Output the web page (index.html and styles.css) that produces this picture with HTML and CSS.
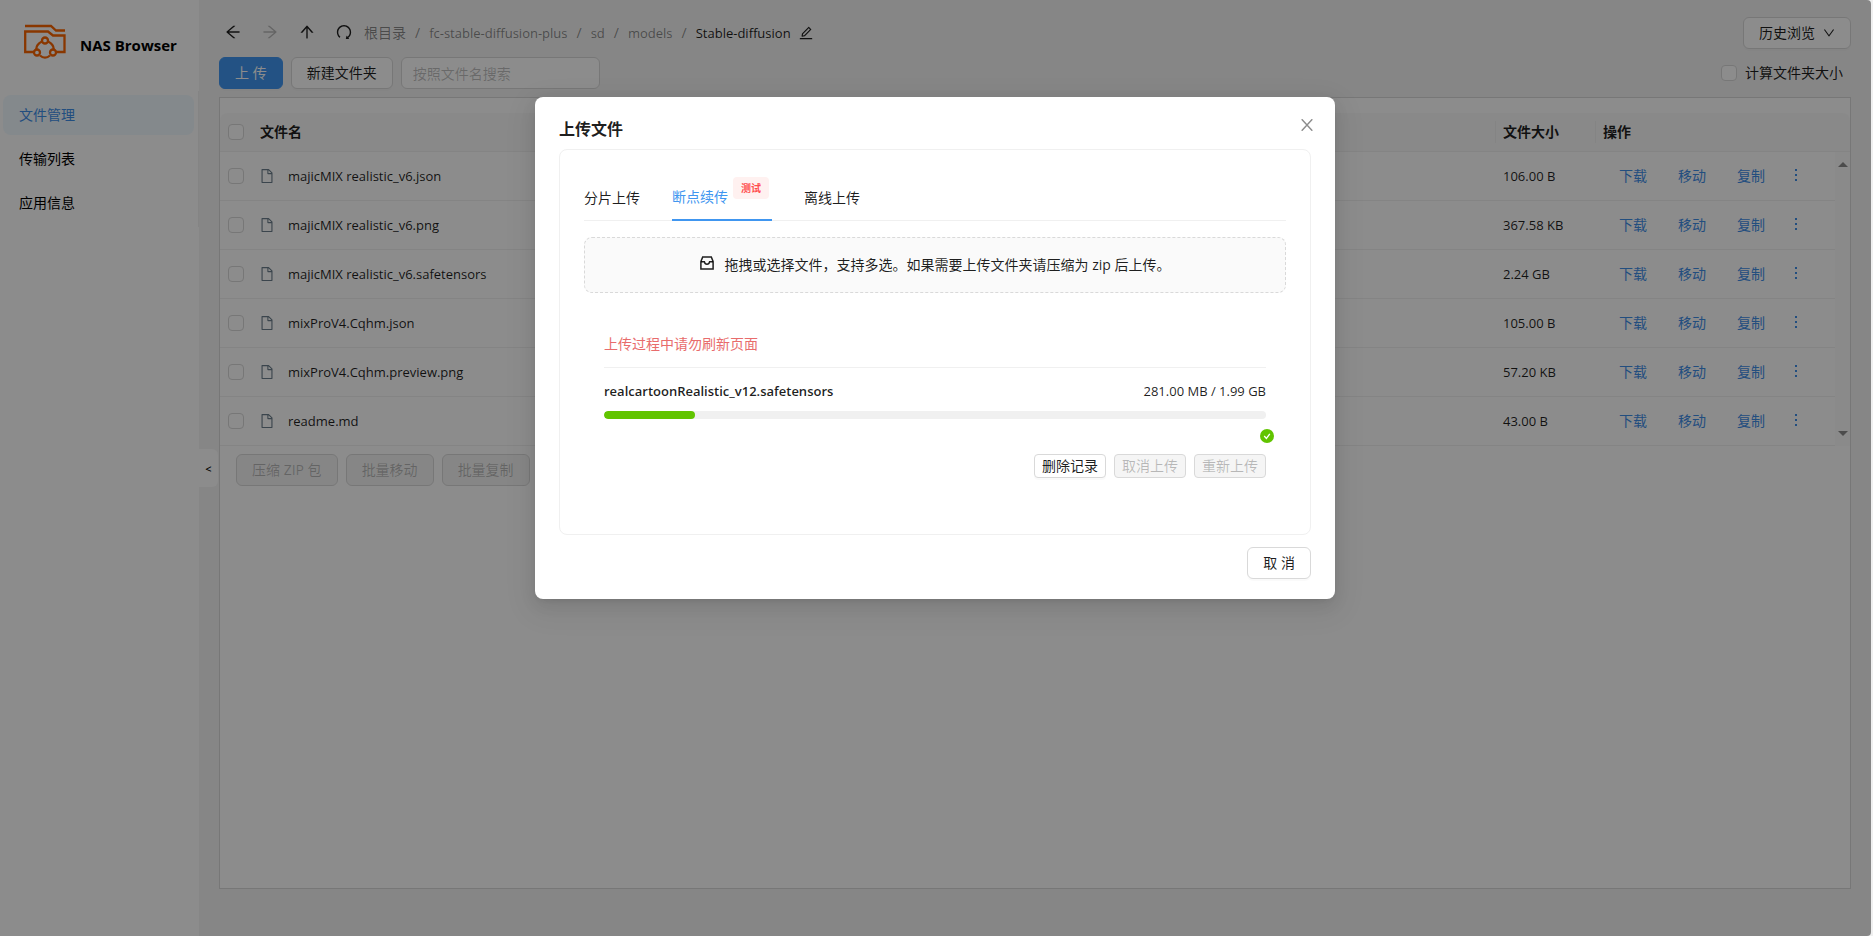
FILE: index.html
```html
<!DOCTYPE html>
<html lang="zh-CN">
<head>
<meta charset="utf-8">
<title>NAS Browser</title>
<link rel="stylesheet" href="styles.css">
</head>
<body>
<svg class="defs" aria-hidden="true">
  <symbol id="file" viewBox="64 64 896 896"><path d="M854.6 288.6L639.4 73.4c-6-6-14.1-9.4-22.6-9.4H192c-17.7 0-32 14.3-32 32v832c0 17.7 14.3 32 32 32h640c17.7 0 32-14.3 32-32V311.3c0-8.5-3.4-16.7-9.4-22.7zM790.2 326H602V137.8L790.2 326zm1.8 562H232V136h302v216a42 42 0 0042 42h216v494z"/></symbol>
  <symbol id="more" viewBox="0 0 14 14"><path d="M6 0h2v2H6zM6 5h2v2H6zM6 10h2v2H6z"/></symbol>
</svg>
<div class="app">
  <aside class="sidebar">
    <div class="brand">
      <svg class="logo" viewBox="0 0 42 36" fill="none" stroke="#fa6400" stroke-width="2.300">
        <path d="M1 2h26l5 4.500h9"/>
        <path d="M10 28H1.200V7.500H24l5 4h11.500V28H32"/>
        <path d="M18 17.500C14 19.500 12.300 22 12.300 25M24 17.500c4 2 5.700 4.500 5.700 7.500M16 31.500c3 2.700 7 2.700 10 0"/>
        <circle cx="21" cy="16.500" r="3"/><circle cx="13" cy="28.500" r="3"/><circle cx="29" cy="28.500" r="3"/>
      </svg>
      <strong class="brand-name">NAS Browser</strong>
    </div>
    <nav class="menu">
      <a class="menu-item active" href="#">文件管理</a>
      <a class="menu-item" href="#">传输列表</a>
      <a class="menu-item" href="#">应用信息</a>
    </nav>
    <button class="collapse" type="button">&lt;</button>
  </aside>

  <main class="main">
    <div class="bar path-bar">
      <div class="nav-icons">
        <button class="icon-btn" type="button" aria-label="后退"><svg viewBox="64 64 896 896"><path d="M872 474H286.900l350.200-304c5.600-4.900 2.200-14-5.200-14h-88.500c-3.900 0-7.600 1.400-10.500 3.900L155 487.800a31.960 31.960 0 000 48.300L535.100 866c1.500 1.300 3.300 2 5.200 2h91.500c7.400 0 10.800-9.200 5.200-14L286.900 550H872c4.400 0 8-3.600 8-8v-60c0-4.400-3.600-8-8-8z"/></svg></button>
        <button class="icon-btn" type="button" aria-label="前进" disabled><svg viewBox="64 64 896 896"><path d="M869 487.800L491.200 159.900c-2.900-2.500-6.600-3.900-10.500-3.900h-88.500c-7.400 0-10.800 9.200-5.200 14l350.200 304H152c-4.400 0-8 3.600-8 8v60c0 4.400 3.600 8 8 8h585.100L386.900 854c-5.600 4.900-2.200 14 5.200 14h91.500c1.900 0 3.800-.7 5.200-2L869 536.200a32.070 32.070 0 000-48.400z"/></svg></button>
        <button class="icon-btn" type="button" aria-label="上级"><svg viewBox="64 64 896 896"><path d="M868 545.500L536.100 163a31.960 31.960 0 00-48.300 0L156 545.500a7.970 7.970 0 006 13.200h81c4.600 0 9-2 12.100-5.500L474 300.900V864c0 4.400 3.600 8 8 8h60c4.400 0 8-3.600 8-8V300.900l218.900 252.300c3 3.500 7.400 5.500 12.100 5.500h81c6.800 0 10.500-8 6-13.200z"/></svg></button>
        <button class="icon-btn" type="button" aria-label="刷新"><svg viewBox="64 64 896 896"><path d="M758.200 839.100C851.800 765.900 912 651.900 912 523.900 912 303 733.500 124.300 512.600 124 291.400 123.700 112 302.800 112 523.900c0 125.200 57.500 236.900 147.600 310.200 3.500 2.800 8.600 2.200 11.400-1.300l39.400-50.500c2.700-3.400 2.100-8.300-1.200-11.100-8.100-6.600-15.900-13.700-23.400-21.200a318.640 318.640 0 01-68.600-101.700C200.400 609 192 567.100 192 523.900s8.400-85.100 25.100-124.500c16.100-38.100 39.200-72.300 68.600-101.700 29.400-29.400 63.600-52.500 101.700-68.600C426.900 212.400 468.800 204 512 204s85.100 8.400 124.500 25.100c38.100 16.100 72.300 39.200 101.700 68.600 29.400 29.400 52.500 63.600 68.600 101.700 16.700 39.400 25.100 81.300 25.100 124.500s-8.400 85.100-25.100 124.500a318.640 318.640 0 01-68.600 101.700c-9.300 9.300-19.100 18-29.300 26L668.200 724a8 8 0 00-14.100 3l-39.600 162.200c-1.200 5 2.600 9.900 7.700 9.900l167 .8c6.700 0 10.500-7.700 6.300-12.900l-37.300-47.900z"/></svg></button>
      </div>
      <nav class="crumbs">
        <a href="#">根目录</a><span>/</span><a class="lat" href="#">fc-stable-diffusion-plus</a><span>/</span><a class="lat" href="#">sd</a><span>/</span><a class="lat" href="#">models</a><span>/</span><span class="lat current">Stable-diffusion</span>
      </nav>
      <button class="icon-btn edit" type="button" aria-label="编辑"><svg viewBox="64 64 896 896"><path d="M257.700 752c2 0 4-.2 6-.5L431.900 722c2-.4 3.900-1.300 5.300-2.800l423.900-423.900a9.960 9.960 0 000-14.100L694.900 114.900c-1.900-1.900-4.400-2.900-7.100-2.900s-5.200 1-7.100 2.900L256.800 538.800c-1.500 1.500-2.400 3.300-2.800 5.300l-29.500 168.200a33.500 33.500 0 009.400 29.800c6.600 6.400 14.900 9.900 23.800 9.900zm67.400-174.400L687.800 215l73.300 73.300-362.700 362.600-88.900 15.700 15.600-89zM880 836H144c-17.700 0-32 14.300-32 32v36c0 4.400 3.600 8 8 8h784c4.400 0 8-3.600 8-8v-36c0-17.700-14.300-32-32-32z"/></svg></button>
      <button class="btn push" type="button">历史浏览<svg class="caret" viewBox="64 64 896 896"><path d="M884 256h-75c-5.100 0-9.900 2.500-12.900 6.600L512 654.200 227.900 262.600c-3-4.100-7.800-6.600-12.900-6.600h-75c-6.500 0-10.300 7.400-6.500 12.700l352.600 486.100c12.800 17.600 39 17.600 51.700 0l352.600-486.100c3.900-5.300.1-12.700-6.400-12.700z"/></svg></button>
    </div>
    <div class="bar">
      <button class="btn primary" type="button">上 传</button>
      <button class="btn" type="button">新建文件夹</button>
      <input class="search" type="text" placeholder="按照文件名搜索" aria-label="按照文件名搜索">
      <label class="calc push"><input class="check" type="checkbox">计算文件夹大小</label>
    </div>

    <section class="panel">
      <table class="files head">
        <colgroup><col class="c-check"><col><col class="c-size"><col class="c-ops"><col class="c-scroll"></colgroup>
        <thead><tr>
          <th><input class="check" type="checkbox" aria-label="全选"></th>
          <th>文件名</th><th class="split">文件大小</th><th class="split">操作</th><th></th>
        </tr></thead>
      </table>
      <div class="rows">
        <table class="files">
          <colgroup><col class="c-check"><col><col class="c-size"><col class="c-ops"></colgroup>
          <tbody>
            <tr><td><input class="check" type="checkbox" aria-label="majicMIX realistic_v6.json"></td><td><div class="name lat"><svg><use href="#file"/></svg>majicMIX realistic_v6.json</div></td><td class="lat">106.00 B</td><td><div class="ops"><a href="#">下载</a><a href="#">移动</a><a href="#">复制</a><a href="#" aria-label="更多"><svg><use href="#more"/></svg></a></div></td></tr>
            <tr><td><input class="check" type="checkbox" aria-label="majicMIX realistic_v6.png"></td><td><div class="name lat"><svg><use href="#file"/></svg>majicMIX realistic_v6.png</div></td><td class="lat">367.58 KB</td><td><div class="ops"><a href="#">下载</a><a href="#">移动</a><a href="#">复制</a><a href="#" aria-label="更多"><svg><use href="#more"/></svg></a></div></td></tr>
            <tr><td><input class="check" type="checkbox" aria-label="majicMIX realistic_v6.safetensors"></td><td><div class="name lat"><svg><use href="#file"/></svg>majicMIX realistic_v6.safetensors</div></td><td class="lat">2.24 GB</td><td><div class="ops"><a href="#">下载</a><a href="#">移动</a><a href="#">复制</a><a href="#" aria-label="更多"><svg><use href="#more"/></svg></a></div></td></tr>
            <tr><td><input class="check" type="checkbox" aria-label="mixProV4.Cqhm.json"></td><td><div class="name lat"><svg><use href="#file"/></svg>mixProV4.Cqhm.json</div></td><td class="lat">105.00 B</td><td><div class="ops"><a href="#">下载</a><a href="#">移动</a><a href="#">复制</a><a href="#" aria-label="更多"><svg><use href="#more"/></svg></a></div></td></tr>
            <tr><td><input class="check" type="checkbox" aria-label="mixProV4.Cqhm.preview.png"></td><td><div class="name lat"><svg><use href="#file"/></svg>mixProV4.Cqhm.preview.png</div></td><td class="lat">57.20 KB</td><td><div class="ops"><a href="#">下载</a><a href="#">移动</a><a href="#">复制</a><a href="#" aria-label="更多"><svg><use href="#more"/></svg></a></div></td></tr>
            <tr><td><input class="check" type="checkbox" aria-label="readme.md"></td><td><div class="name lat"><svg><use href="#file"/></svg>readme.md</div></td><td class="lat">43.00 B</td><td><div class="ops"><a href="#">下载</a><a href="#">移动</a><a href="#">复制</a><a href="#" aria-label="更多"><svg><use href="#more"/></svg></a></div></td></tr>
          </tbody>
        </table>
        <div class="scrollbar">
          <svg viewBox="0 0 10 5"><path d="M5 0l5 5H0z"/></svg>
          <svg viewBox="0 0 10 5"><path d="M0 0h10L5 5z"/></svg>
        </div>
      </div>
      <div class="batch">
        <button class="btn" type="button" disabled>压缩 ZIP 包</button>
        <button class="btn" type="button" disabled>批量移动</button>
        <button class="btn" type="button" disabled>批量复制</button>
      </div>
    </section>
  </main>

  <div class="mask">
    <div class="modal" role="dialog" aria-labelledby="dlg-title">
      <header class="modal-head">
        <h2 id="dlg-title">上传文件</h2>
        <button class="close" type="button" aria-label="关闭"><svg viewBox="0 0 12 12" fill="none" stroke="currentColor" stroke-width="1.400"><path d="M.7.200l10.600 11.600M11.300.200L.7 11.800"/></svg></button>
      </header>
      <div class="card">
        <div class="tabs" role="tablist">
          <button class="tab" role="tab" type="button">分片上传</button>
          <button class="tab active" role="tab" type="button">断点续传<span class="tag">测试</span></button>
          <button class="tab" role="tab" type="button">离线上传</button>
        </div>
        <div class="drop">
          <svg viewBox="0 0 14 14" fill="none" stroke="currentColor" stroke-width="1.500"><path d="M.9 5.500L2.700.9h8.600l1.800 4.600v7.600H.9z"/><path d="M1 5.800h3.400c.3 1.600 1.300 2.400 2.600 2.400s2.300-.8 2.600-2.400H13"/></svg>
          <span>拖拽或选择文件，支持多选。如果需要上传文件夹请压缩为 zip 后上传。</span>
        </div>
        <div class="tasks">
          <p class="warn">上传过程中请勿刷新页面</p>
          <div class="task-info lat"><b>realcartoonRealistic_v12.safetensors</b><span>281.00 MB / 1.99 GB</span></div>
          <div class="progress"><div class="progress-fill" style="width:13.8%"></div></div>
          <div class="status"><svg viewBox="0 0 14 14"><circle cx="7" cy="7" r="7" fill="#61c400"/><path d="M4.200 7l2.200 2.500 3.400-4.700" fill="none" stroke="#fff" stroke-width="1.300"/></svg></div>
          <div class="task-actions">
            <button class="btn small" type="button">删除记录</button>
            <button class="btn small" type="button" disabled>取消上传</button>
            <button class="btn small" type="button" disabled>重新上传</button>
          </div>
        </div>
      </div>
      <footer class="modal-foot"><button class="btn" type="button">取 消</button></footer>
    </div>
  </div>
</div>
</body>
</html>
```
FILE: styles.css
```css
* { box-sizing: border-box; }
body {
  margin: 0;
  padding-right: 2px;
  background: #f0f0f0;
  color: rgba(0, 0, 0, 0.88);
  font: 14px/22px "Open Sans", "Noto Sans CJK SC", sans-serif;
}
button, input { font: inherit; color: inherit; }
button { cursor: pointer; }
a { color: inherit; text-decoration: none; }
svg { display: block; fill: currentColor; }
.lat { font-size: 13px; }
.defs { display: none; }

.app {
  position: relative;
  display: flex;
  min-height: 100vh;
  overflow: hidden;
  border-radius: 0 4px 4px 0;
  background: #f5f5f5;
}

.sidebar { position: relative; width: 199px; flex: none; background: #fff; color: #000; }
.brand { display: flex; align-items: center; gap: 14px; height: 91px; padding: 0 0 2px 24px; }
.logo { width: 42px; height: 36px; fill: none; margin-bottom: 6px; }
.brand-name { font-size: 15px; font-weight: 700; }
.menu { display: flex; flex-direction: column; gap: 4px; padding: 4px 4px 4px 3px; border-right: 1px solid #f0f0f0; }
.menu-item { height: 40px; padding-left: 16px; border-radius: 8px; line-height: 40px; }
.menu-item.active { background: #f0faff; color: #3f8ee8; }
.collapse {
  position: absolute;
  left: 100%;
  top: 449px;
  width: 19px;
  height: 38px;
  padding: 2px 0 0;
  border: 0;
  border-radius: 0 6px 6px 0;
  background: #fff;
  font-size: 11px;
  font-weight: 600;
}

.main { flex: 1; display: flex; flex-direction: column; gap: 8px; padding: 17px 20px 47px; }
.bar { display: flex; align-items: center; gap: 8px; height: 32px; }
.push { margin-left: auto; }
.nav-icons { display: flex; gap: 21px; margin-right: 4px; padding: 0 0 2px 6px; }
.icon-btn { padding: 0; border: 0; background: none; }
.icon-btn svg { width: 16px; height: 16px; }
.icon-btn:disabled { color: rgba(0, 0, 0, 0.25); }
.icon-btn.edit svg { width: 14px; height: 14px; }
.crumbs { display: flex; gap: 9px; color: rgba(0, 0, 0, 0.45); }
.crumbs .current { color: rgba(0, 0, 0, 0.88); }
.path-bar .btn { gap: 8px; }

.btn {
  display: inline-flex;
  align-items: center;
  justify-content: center;
  height: 32px;
  padding: 0 15px;
  border: 1px solid #d9d9d9;
  border-radius: 6px;
  background: #fff;
  box-shadow: 0 2px 0 rgba(0, 0, 0, 0.02);
  white-space: pre;
}
.btn:disabled { background: #f5f5f5; color: rgba(0, 0, 0, 0.25); box-shadow: none; }
.btn.primary { border-color: #4096f0; background: #4096f0; color: #fff; }
.btn.small { height: 24px; padding: 0 7px; border-radius: 4px; }
.caret { width: 12px; height: 12px; }
.search { width: 199px; height: 32px; padding: 0 11px; border: 1px solid #d9d9d9; border-radius: 6px; background: #fff; }
.search::placeholder { color: rgba(0, 0, 0, 0.25); }
.calc { display: flex; align-items: center; gap: 8px; padding-right: 8px; }
.check {
  appearance: none;
  display: block;
  width: 16px;
  height: 16px;
  margin: 0;
  border: 1px solid #d9d9d9;
  border-radius: 4px;
  background: #fff;
}

.panel { flex: 1; padding-top: 15px; border: 1px solid #d9d9d9; background: #fff; }
.files { width: 100%; table-layout: fixed; border-collapse: separate; border-spacing: 0; }
.files th, .files td { padding: 0 8px; border-bottom: 1px solid #f0f0f0; text-align: left; }
.files th { height: 39px; background: #fafafa; font-weight: 600; }
.files th:first-child { border-top-left-radius: 8px; }
.files th:last-child { border-top-right-radius: 8px; }
.files td { height: 49px; }
.files .split { background: linear-gradient(#f0f0f0, #f0f0f0) 0 50% / 1px 22px no-repeat #fafafa; }
.c-check { width: 32px; }
.c-size { width: 100px; }
.c-ops { width: 240px; }
.c-scroll { width: 15px; }
.rows { display: flex; }
.name { display: flex; align-items: center; gap: 14px; }
.name svg { width: 14px; height: 14px; fill: #6c7f8c; }
.ops { display: flex; align-items: center; gap: 31px; padding-left: 16px; color: #3f8ee8; }
.ops svg { width: 14px; height: 14px; margin-left: -7px; }
.scrollbar {
  display: flex;
  flex-direction: column;
  justify-content: space-between;
  align-items: center;
  width: 15px;
  flex: none;
  padding: 10px 0;
  background: #fcfcfc;
  color: #8b8b8b;
}
.scrollbar svg { width: 10px; height: 5px; }
.batch { display: flex; gap: 8px; padding: 8px 16px; }

.mask { position: absolute; inset: 0; padding: 97px 1px 0 0; background: rgba(0, 0, 0, 0.45); }
.modal {
  width: 800px;
  margin: 0 auto;
  padding: 20px 24px;
  border-radius: 8px;
  background: #fff;
  box-shadow: 0 6px 16px rgba(0, 0, 0, 0.08), 0 3px 6px -4px rgba(0, 0, 0, 0.12), 0 9px 28px 8px rgba(0, 0, 0, 0.05);
}
.modal-head { display: flex; justify-content: space-between; align-items: flex-start; margin-bottom: 8px; }
.modal-head h2 { margin: 0; font-size: 16px; line-height: 24px; font-weight: 600; }
.close { margin-right: -2px; padding: 2px 0; border: 0; background: none; color: rgba(0, 0, 0, 0.45); }
.close svg { width: 12px; height: 12px; fill: none; }
.card { min-height: 386px; padding: 24px; border: 1px solid #f0f0f0; border-radius: 8px; }
.tabs { display: flex; gap: 32px; height: 47px; margin-bottom: 16px; border-bottom: 1px solid #f0f0f0; }
.tab { display: flex; height: 47px; padding: 13px 0 0; border: 0; background: none; }
.tab.active { padding: 12px 3px 0 0; border-bottom: 2px solid #4096f0; color: #4096f0; }
.tag {
  align-self: flex-start;
  height: 22px;
  margin: -9px 0 0 5px;
  padding: 0 8px;
  border-radius: 4px;
  background: #fff1f0;
  color: #ff4d4f;
  font-size: 10px;
  font-weight: 700;
}
.drop {
  display: flex;
  align-items: center;
  justify-content: center;
  gap: 11px;
  height: 56px;
  border: 1px dashed #d9d9d9;
  border-radius: 8px;
  background: #fafafa;
}
.drop > svg { width: 14px; height: 14px; margin-bottom: 4px; fill: none; }
.tasks { padding: 40px 20px 0; }
.warn { margin: 0; padding-bottom: 12px; border-bottom: 1px solid #f0f0f0; color: #e86c6c; }
.task-info { display: flex; justify-content: space-between; padding: 12px 0 9px; }
.task-info b { font-weight: 600; }
.progress { height: 8px; border-radius: 4px; background: #f0f0f0; overflow: hidden; }
.progress-fill { height: 100%; border-radius: 4px; background: #61c400; }
.status { display: flex; justify-content: flex-end; margin: 10px -8px 11px 0; }
.status svg { width: 14px; height: 14px; }
.task-actions { display: flex; justify-content: flex-end; gap: 8px; }
.modal-foot { display: flex; justify-content: flex-end; margin-top: 12px; }
```
